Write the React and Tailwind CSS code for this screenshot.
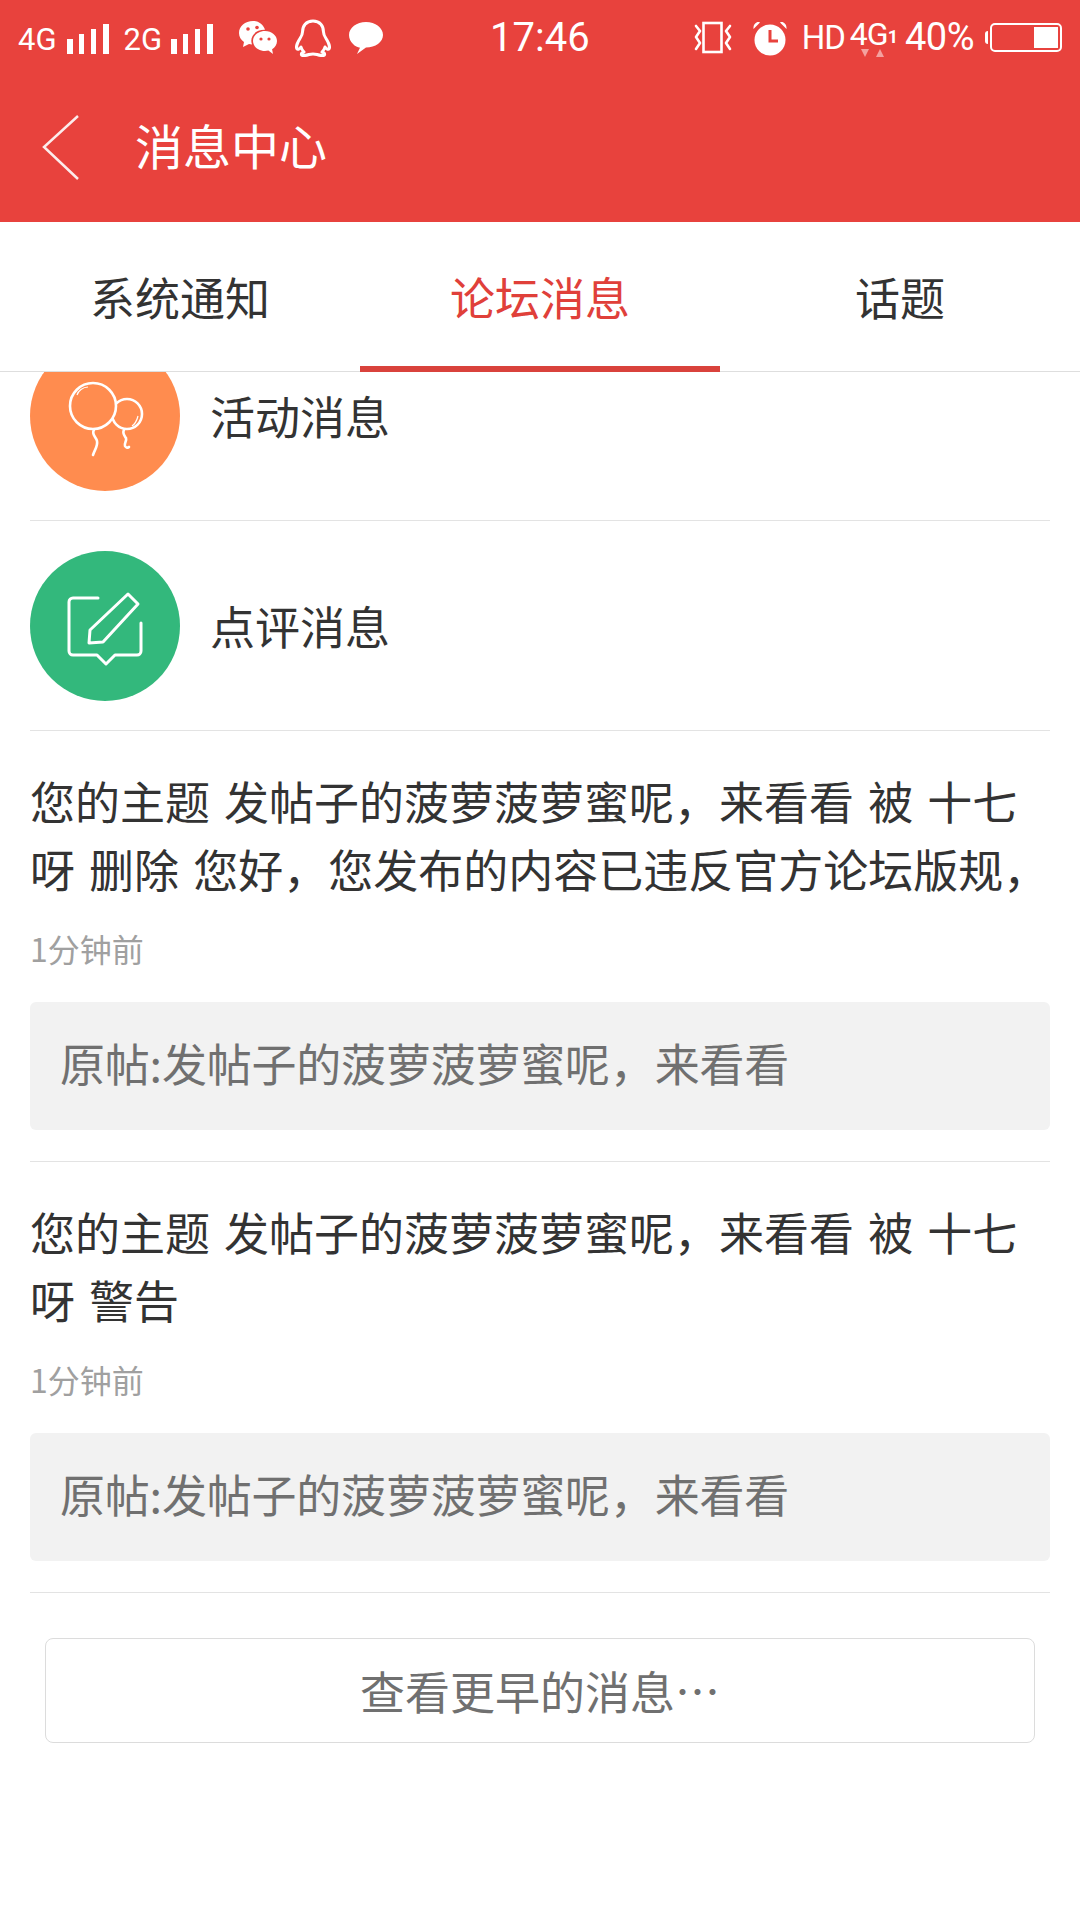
const cjk = { fontFamily: '"Noto Sans CJK SC", sans-serif' };

const Bars = () => (
  <svg width="42" height="32" viewBox="0 0 42 32" fill="#fff">
    <rect x="0" y="15" width="6" height="15" />
    <rect x="12" y="10" width="5" height="20" />
    <rect x="24" y="5" width="5" height="25" />
    <rect x="36" y="0" width="6" height="30" />
  </svg>
);

const WeChat = () => (
  <svg width="40" height="36" viewBox="0 0 40 36" fill="#fff">
    <path d="M15 1C7 1 1 6 1 13c0 4 2 7 5 9l-1 5 6-3c1 .3 2 .4 3 .5-.5-1.400-.7-2.500-.7-3.700C13.300 14 19.500 9.500 27 9.800 25.500 4.700 20.800 1 15 1z" />
    <path d="M39 21c0-5.500-5.300-10-12-10s-12 4.500-12 10 5.300 10 12 10c1.200 0 2.300-.1 3.400-.4l4.600 3.400-.9-4.700C37 27.500 39 24.500 39 21z" />
    <circle cx="10" cy="9" r="1.800" fill="#e8423d" />
    <circle cx="19" cy="7.500" r="1.800" fill="#e8423d" />
    <circle cx="23" cy="19" r="1.600" fill="#e8423d" />
    <circle cx="31" cy="19" r="1.600" fill="#e8423d" />
  </svg>
);

const QQ = () => (
  <svg width="38" height="38" viewBox="0 0 38 38" fill="none" stroke="#fff" strokeWidth="3" strokeLinejoin="round">
    <path d="M19 2c-7 0-10.500 5-10.500 11 0 2-.5 3.500-2.500 6.500-3 4.500-4 9-3 10.500 1 1 3-.5 4-2 .5 2 1.500 3.500 3 5-2 .8-3 1.500-2.500 2.800C8 37 12 36.500 15 35.500c2.500-.7 5.500-.7 8 0 3 1 7 1.500 7.500.3.500-1.300-.5-2-2.500-2.800 1.500-1.500 2.500-3 3-5 1 1.500 3 3 4 2 1-1.500 0-6-3-10.500-2-3-2.500-4.500-2.500-6.500C29.500 7 26 2 19 2z" />
  </svg>
);

const Chat = () => (
  <svg width="34" height="32" viewBox="0 0 34 32" fill="#fff">
    <path d="M17 0C7.600 0 0 5.800 0 13s6.500 12.200 11 12.800L8 32l9-6.500c9.400 0 17-5.300 17-12.500S26.400 0 17 0z" />
  </svg>
);

const Vibrate = () => (
  <svg width="38" height="36" viewBox="0 0 38 36" fill="none" stroke="#fff" strokeWidth="2.600">
    <rect x="9.500" y="3" width="18" height="29" />
    <path d="M2 6l4 5-4 6 4 6-4 6M36 6l-4 5 4 6-4 6 4 6" strokeLinecap="round" strokeLinejoin="round" />
  </svg>
);

const Alarm = () => (
  <svg width="36" height="36" viewBox="0 0 36 36">
    <circle cx="18" cy="20" r="15.500" fill="#fff" />
    <path d="M1.500 9 8 2.500C5 1 1 4 1.500 9zM34.500 9 28 2.500c3-1.500 7 1.500 6.500 6.500z" fill="#fff" />
    <path d="M18 10v11h8" fill="none" stroke="#e8423d" strokeWidth="3" />
  </svg>
);

const Balloons = () => (
  <svg width="150" height="150" viewBox="0 0 150 150" fill="none" stroke="#fff" strokeWidth="2.600">
    <circle cx="97" cy="73" r="15" />
    <circle cx="63" cy="65" r="23" fill="#ff8c4f" />
    <path d="M47 54c1-4 6-8 11-8M102 85c3-2 5-6 6-10" strokeWidth="1.200" />
    <path d="M64 89c-3 4 2 7 3 11 1 5-2 8-4 14" strokeLinecap="round" />
    <path d="M94 89c-2 3 0 5 2 8 1 3-2 5-1 8 1 2 3 2 4 1" strokeLinecap="round" />
  </svg>
);

const EditNote = () => (
  <svg width="150" height="150" viewBox="0 0 150 150" fill="none" stroke="#fff" strokeWidth="3">
    <path d="M68 47H43a4 4 0 0 0-4 4v49a4 4 0 0 0 4 4h24l9 9 9-9h22a4 4 0 0 0 4-4V72" strokeLinecap="round" strokeLinejoin="round" />
    <path d="M60 79 98 43l10 10-35 38-14 1z" strokeLinejoin="round" />
  </svg>
);

const Notice = ({ lines }) => (
  <div className="mx-[30px] border-b border-[#e3e3e3] pt-[36px] pb-[31px]">
    <div className="text-[45px] leading-[68px] text-[#333] whitespace-nowrap [word-spacing:4px]" style={cjk}>
      {lines.map((l) => <div key={l}>{l}</div>)}
    </div>
    <div className="mt-[23px] text-[32px] leading-[44px] text-[#a0a0a0]" style={cjk}>1分钟前</div>
    <div className="mt-[32px] h-[128px] rounded-[6px] bg-[#f2f2f2] pl-[30px] pb-[6px] flex items-center text-[45px] tracking-[-0.2px] text-[#707070]" style={cjk}>
      原帖:发帖子的菠萝菠萝蜜呢，来看看
    </div>
  </div>
);

const Row = ({ bg, icon, label, className }) => (
  <div className={`mx-[30px] flex items-center gap-[30px] border-b border-[#e3e3e3] py-[29px] ${className || ''}`}>
    <div className={`w-[150px] h-[150px] rounded-full ${bg}`}>{icon}</div>
    <div className="text-[45px] text-[#333]" style={cjk}>{label}</div>
  </div>
);

export default function App() {
  return (
    <div className="w-[1080px] h-[1920px] bg-white overflow-hidden" style={cjk}>
      <div className="h-[222px] bg-[#e8423d] text-white">
        <div className="h-[75px] flex items-center pl-[18px] pr-[18px]" style={{ fontFamily: 'Roboto, sans-serif' }}>
          <span className="text-[31px] mt-[6px]">4G</span>
          <span className="ml-[10px] mt-[4px]"><Bars /></span>
          <span className="ml-[15px] text-[31px] mt-[6px]">2G</span>
          <span className="ml-[9px] mt-[4px]"><Bars /></span>
          <span className="ml-[25px]"><WeChat /></span>
          <span className="ml-[16px]"><QQ /></span>
          <span className="ml-[17px]"><Chat /></span>
          <span className="ml-[107px] text-[40px] w-[103px]">17:46</span>
          <span className="ml-[101px]"><Vibrate /></span>
          <span className="ml-[20px]"><Alarm /></span>
          <span className="ml-[14px] text-[33px] tracking-[-1px]">HD</span>
          <span className="relative ml-[5px] text-[32px] -mt-[8px] tracking-[-1px]">
            4G
            <span className="absolute left-[11px] bottom-[1px] w-0 h-0 border-x-[4px] border-x-transparent border-t-[8px] border-t-white/50" />
            <span className="absolute left-[26px] bottom-[1px] w-0 h-0 border-x-[4px] border-x-transparent border-b-[8px] border-b-white/50" />
          </span>
          <span className="text-[18px] font-bold -mt-[2px]">1</span>
          <span className="ml-[7px] text-[38px] tracking-[-0.5px]">40%</span>
          <span className="ml-[11px] flex items-center">
            <span className="w-[3px] h-[13px] bg-white rounded-l-sm" />
            <span className="ml-[2px] w-[72px] h-[29px] border-2 border-white rounded-[5px] flex justify-end p-[2px]">
              <span className="w-[24px] bg-white" />
            </span>
          </span>
        </div>
        <div className="h-[147px] flex items-center pl-[42px]">
          <svg width="38" height="66" viewBox="0 0 38 66" fill="none" stroke="#fff" strokeWidth="2.500" opacity="0.9" className="-mt-[2px]">
            <path d="M36 1 2 32l34 32" />
          </svg>
          <span className="ml-[55px] text-[48px] -mt-[10px]">消息中心</span>
        </div>
      </div>

      <div className="h-[150px] flex border-b border-[#dedede] text-[45px] text-[#333]">
        <div className="flex-1 flex items-center justify-center">系统通知</div>
        <div className="flex-1 flex items-center justify-center text-[#e0403a] pt-[6px] border-b-[6px] border-[#d9423c] -mb-px">论坛消息</div>
        <div className="flex-1 flex items-center justify-center">话题</div>
      </div>

      <div className="overflow-hidden">
        <Row className="-mt-[60px]" bg="bg-[#ff8c4f]" icon={<Balloons />} label="活动消息" />
        <Row className="pt-[30px]" bg="bg-[#33b87c]" icon={<EditNote />} label="点评消息" />
        <Notice lines={['您的主题 发帖子的菠萝菠萝蜜呢，来看看 被 十七', '呀 删除 您好，您发布的内容已违反官方论坛版规，']} />
        <Notice lines={['您的主题 发帖子的菠萝菠萝蜜呢，来看看 被 十七', '呀 警告']} />
        <div className="mx-[45px] mt-[45px] h-[105px] rounded-[8px] border border-[#dcdcdc] flex items-center justify-center text-[45px] text-[#707070]">
          查看更早的消息…
        </div>
      </div>
    </div>
  );
}
